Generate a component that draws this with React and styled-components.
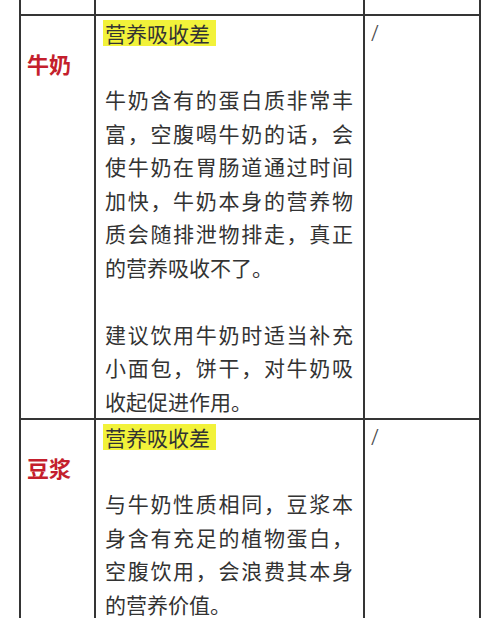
import React from "react";
import styled, { createGlobalStyle } from "styled-components";

const Global = createGlobalStyle`
  html, body {
    margin: 0;
    padding: 0;
    background: #ffffff;
    overflow: hidden;
  }
  body {
    font-family: "Noto Sans CJK SC", "Noto Sans", sans-serif;
  }
`;

const LINE = 33.5;
const BORDER = "2px solid #353535";

const Table = styled.div`
  box-sizing: border-box;
  width: 462px;
  margin-left: 19px;
  border-left: ${BORDER};
  border-right: ${BORDER};
`;

const Row = styled.div`
  display: grid;
  grid-template-columns: 75px 269px 114px;
  border-bottom: ${BORDER};
  height: ${(p) => (p.$height ? `${p.$height}px` : "auto")};
`;

const Cell = styled.div`
  box-sizing: border-box;
  border-right: ${BORDER};
  &:last-child {
    border-right: none;
  }
`;

const LabelCell = styled(Cell)`
  padding: 31px 0 0 6px;
  color: #c41f2d;
  font-family: "Noto Sans CJK SC", sans-serif;
  font-size: 22px;
  font-weight: 700;
  line-height: ${LINE}px;
`;

const TextCell = styled(Cell)`
  padding: 0 10px 0 9px;
  color: #333333;
  font-family: "Noto Sans CJK SC", sans-serif;
  font-size: 21px;
  line-height: ${LINE}px;
  text-align: justify;
`;

const NoteCell = styled(Cell)`
  padding: 0 0 0 6px;
  color: #4a4a4a;
  font-family: "Noto Sans", "Liberation Sans", sans-serif;
  font-size: 22px;
  font-weight: 300;
  line-height: ${LINE}px;
`;

const TagLine = styled.div`
  display: flex;
  align-items: center;
  height: ${LINE}px;
`;

const Highlight = styled.span`
  display: inline-block;
  height: 26px;
  line-height: 26px;
  padding: 0 6px 0 2px;
  margin-left: -2px;
  background: #f2f23a;
`;

const Para = styled.p`
  margin: ${LINE}px 0 0 0;
`;

const rows = [
  {
    label: "牛奶",
    tag: "营养吸收差",
    paras: [
      "牛奶含有的蛋白质非常丰富，空腹喝牛奶的话，会使牛奶在胃肠道通过时间加快，牛奶本身的营养物质会随排泄物排走，真正的营养吸收不了。",
      "建议饮用牛奶时适当补充小面包，饼干，对牛奶吸收起促进作用。",
    ],
    note: "/",
  },
  {
    label: "豆浆",
    tag: "营养吸收差",
    paras: [
      "与牛奶性质相同，豆浆本身含有充足的植物蛋白，空腹饮用，会浪费其本身的营养价值。",
    ],
    note: "/",
  },
];

export default function App() {
  return (
    <>
      <Global />
      <Table>
        <Row $height={14}>
          <Cell />
          <Cell />
          <Cell />
        </Row>
        {rows.map((r) => (
          <Row key={r.label}>
            <LabelCell>{r.label}</LabelCell>
            <TextCell>
              <TagLine>
                <Highlight>{r.tag}</Highlight>
              </TagLine>
              {r.paras.map((t) => (
                <Para key={t}>{t}</Para>
              ))}
            </TextCell>
            <NoteCell>{r.note}</NoteCell>
          </Row>
        ))}
      </Table>
    </>
  );
}
